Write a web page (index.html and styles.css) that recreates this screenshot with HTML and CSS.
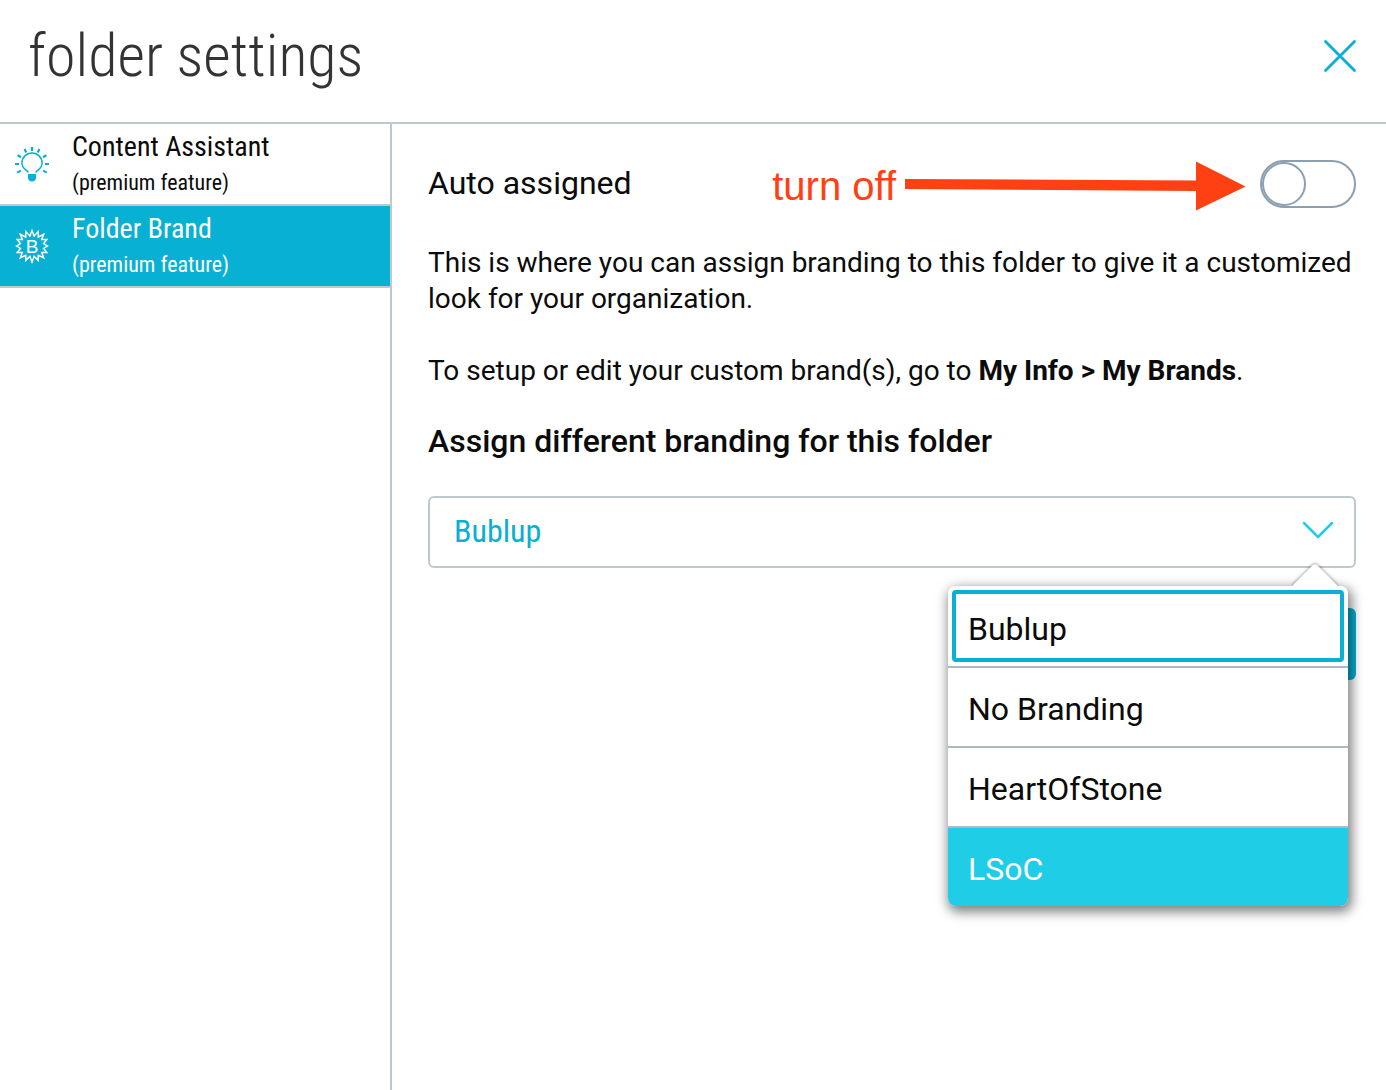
FILE: index.html
```html
<!DOCTYPE html>
<html lang="en">
<head>
    <meta charset="UTF-8">
    <meta name="viewport" content="width=device-width, initial-scale=1.0">
    <title>Folder Settings</title>
    <link rel="stylesheet" href="styles.css">
</head>
<body>
    <header class="header">
        <h1>folder settings</h1>
        <button class="close" type="button" aria-label="Close">
            <svg width="32" height="32" viewBox="0 0 32 32">
                <path d="M1.5 1.5L30.5 30.5M30.5 1.5L1.5 30.5" fill="none" stroke="#08b0d3" stroke-width="2.8" stroke-linecap="round"/>
            </svg>
        </button>
    </header>

    <div class="content">
        <nav class="sidebar">
            <a class="nav-item" href="#assistant">
                <svg class="nav-icon" width="36" height="36" viewBox="0 0 36 36">
                    <g fill="none" stroke="#08b0d3">
                        <path d="M14.500 26.500C13.500 24.500 7.900 23 7.900 17A10.100 10.100 0 0 1 28.100 17C28.100 23 22.500 24.500 21.500 26.500" stroke-width="1.5"/>
                        <path d="M18 1V5M10.500 3L12.300 6.400M25.500 3L23.700 6.400M3.500 9.200L7 11.200M32.500 9.200L29 11.200M1 18H5M31 18H35M3.200 26.600L6.800 24.600M32.800 26.600L29.200 24.600" stroke-width="2.2"/>
                    </g>
                    <path d="M14 28H22V31.500Q22 35.500 18 35.500Q14 35.500 14 31.500Z" fill="#08b0d3"/>
                </svg>
                <span class="nav-text">
                    <span class="nav-title">Content Assistant</span>
                    <span class="nav-note">(premium feature)</span>
                </span>
            </a>
            <a class="nav-item active" href="#brand">
                <svg class="nav-icon" width="36" height="36" viewBox="0 0 36 36">
                    <path d="M18 2.500L20.100 8L24.200 3.600L24.300 9L29.700 6.300L27.700 11.400L32.800 11.500L29.600 15.600L33.500 18L29.600 20.400L32.800 24.500L27.700 24.600L29.700 29.700L24.300 27.300L24.200 32.400L20.100 28.300L18 34L15.900 28.300L11.800 32.400L11.700 27.300L6.300 29.700L8.300 24.600L3.200 24.500L6.400 20.400L2.500 18L6.400 15.600L3.200 11.500L8.300 11.400L6.300 6.300L11.700 9L11.800 3.600L15.900 8Z" fill="none" stroke="#fff" stroke-width="1.5"/>
                    <text class="brand-letter" x="18" y="25" text-anchor="middle">B</text>
                </svg>
                <span class="nav-text">
                    <span class="nav-title">Folder Brand</span>
                    <span class="nav-note">(premium feature)</span>
                </span>
            </a>
        </nav>

        <main class="panel">
            <div class="auto-row">
                <label for="auto">Auto assigned</label>
                <div class="hint">
                    <span>turn off</span>
                    <svg width="342" height="50" viewBox="0 0 342 50">
                        <path d="M1 18L292 19.500V0.500L341.500 25.500L292 49.500V30L1 28Z" fill="#ff4013"/>
                    </svg>
                </div>
                <input class="toggle" type="checkbox" role="switch" id="auto">
            </div>

            <p>This is where you can assign branding to this folder to give it a customized look for your organization.</p>
            <p>To setup or edit your custom brand(s), go to <b>My Info &gt; My Brands</b>.</p>

            <h2><label for="brand">Assign different branding for this folder</label></h2>

            <div class="dropdown">
                <select class="brand-select" id="brand">
                    <option selected>Bublup</option>
                    <option>No Branding</option>
                    <option>HeartOfStone</option>
                    <option>LSoC</option>
                </select>
                <svg class="chevron" width="32" height="18" viewBox="0 0 32 18">
                    <path d="M2 2L16 16L30 2" fill="none" stroke="#1fcde6" stroke-width="2.500" stroke-linecap="round" stroke-linejoin="round"/>
                </svg>
                <ul class="menu">
                    <li class="focused"><button type="button">Bublup</button></li>
                    <li><button type="button">No Branding</button></li>
                    <li><button type="button">HeartOfStone</button></li>
                    <li class="highlight"><button type="button">LSoC</button></li>
                </ul>
            </div>

            <button class="save" type="button" aria-label="Save"></button>
        </main>
    </div>
</body>
</html>
```

FILE: styles.css
```css
* {
    box-sizing: border-box;
}

body {
    font-family: Roboto, "Liberation Sans", sans-serif;
    background-color: #fff;
    color: #0b0b0b;
    margin: 0;
    min-height: 100vh;
    display: flex;
    flex-direction: column;
}

button {
    font-family: inherit;
    border: none;
    background: none;
    padding: 0;
    cursor: pointer;
}

.header {
    display: flex;
    align-items: center;
    justify-content: space-between;
    padding: 16px 30px 26px 28px;
    border-bottom: 2px solid #bdc9cd;
}

.header h1 {
    margin: 0;
    font-family: "Roboto Condensed", Roboto, sans-serif;
    font-size: 60px;
    font-weight: 300;
    line-height: 80px;
    color: #333;
}

.close svg {
    display: block;
}

.content {
    flex: 1;
    display: flex;
}

/* Left side navigation */
.sidebar {
    flex: none;
    width: 392px;
    border-right: 2px solid #bdc9cd;
    font-family: "Roboto Condensed", Roboto, sans-serif;
}

.nav-item {
    display: flex;
    align-items: center;
    gap: 22px;
    padding: 0 14px;
    border-bottom: 2px solid #bdc9cd;
    color: #0b0b0b;
    text-decoration: none;
}

.nav-item.active {
    background-color: #08b0d3;
    background-clip: padding-box;
    color: #fff;
}

.nav-text {
    padding: 5px 0 3px;
}

.nav-title,
.nav-note {
    display: block;
    line-height: 36px;
}

.nav-title {
    font-size: 28px;
}

.nav-note {
    font-size: 22px;
}

.brand-letter {
    font-family: "Liberation Sans", Arial, sans-serif;
    font-size: 19px;
    fill: #fff;
}

/* Right side settings */
.panel {
    flex: 1;
    padding: 36px 30px 36px 36px;
}

.auto-row {
    display: flex;
    align-items: center;
    margin-bottom: 37px;
    height: 48px;
    font-size: 32px;
}

.auto-row label {
    padding-bottom: 2px;
}

.hint {
    display: flex;
    align-items: center;
    gap: 8px;
    margin-left: auto;
    margin-right: 14px;
    padding-top: 4px;
    font-family: "Liberation Sans", Arial, sans-serif;
    font-size: 40px;
    color: #ff4013;
}

.toggle {
    appearance: none;
    width: 96px;
    height: 48px;
    margin: 0;
    border: 2px solid #8aa0b0;
    border-radius: 24px;
    cursor: pointer;
}

.toggle::before {
    content: "";
    display: block;
    box-sizing: border-box;
    width: 44px;
    height: 44px;
    border: 2px solid #8aa0b0;
    border-radius: 50%;
}

.toggle:checked::before {
    margin-left: auto;
}

.panel p {
    margin: 0 0 36px;
    font-size: 28px;
    line-height: 36px;
}

.panel h2 {
    margin: 0 0 39px;
    font-size: 32px;
    font-weight: 500;
    line-height: 32px;
}

.dropdown {
    position: relative;
    margin-bottom: 40px;
}

.brand-select {
    appearance: none;
    display: block;
    width: 100%;
    height: 72px;
    padding: 0 24px 2px;
    border: 2px solid #bdc9cd;
    border-radius: 6px;
    background-color: #fff;
    font-family: "Roboto Condensed", Roboto, sans-serif;
    font-size: 32px;
    color: #08b0d3;
}

.chevron {
    position: absolute;
    top: 25px;
    right: 22px;
    pointer-events: none;
}

.menu {
    position: absolute;
    top: 90px;
    right: 8px;
    width: 400px;
    margin: 0;
    padding: 0;
    list-style: none;
    background-color: #fff;
    border-radius: 8px;
    box-shadow: 2px 4px 12px 2px rgba(0, 0, 0, 0.5);
}

/* Little pointer above the menu */
.menu::before {
    content: "";
    position: absolute;
    top: -16px;
    right: 16px;
    width: 34px;
    height: 34px;
    background-color: #fff;
    border-radius: 4px;
    box-shadow: -1px -1px 3px rgba(0, 0, 0, 0.3);
    transform: rotate(45deg);
}

.menu li {
    position: relative;
    border-bottom: 2px solid #adb9c4;
    background-color: #fff;
}

.menu button {
    display: block;
    width: 100%;
    height: 78px;
    padding: 4px 20px 0;
    font-size: 32px;
    text-align: left;
    color: #0b0b0b;
}

.menu .focused {
    padding: 4px;
    border-radius: 8px 8px 0 0;
}

.menu .focused button {
    height: 72px;
    padding: 6px 12px 0;
    border: 4px solid #08b0d3;
    border-radius: 4px;
}

.menu .highlight {
    border-bottom: none;
    border-radius: 0 0 8px 8px;
    background-color: #1fcde6;
}

.menu .highlight button {
    color: #fff;
}

.save {
    display: block;
    width: 200px;
    height: 72px;
    margin-left: auto;
    border-radius: 6px;
    background-color: #08b0d3;
}
```
